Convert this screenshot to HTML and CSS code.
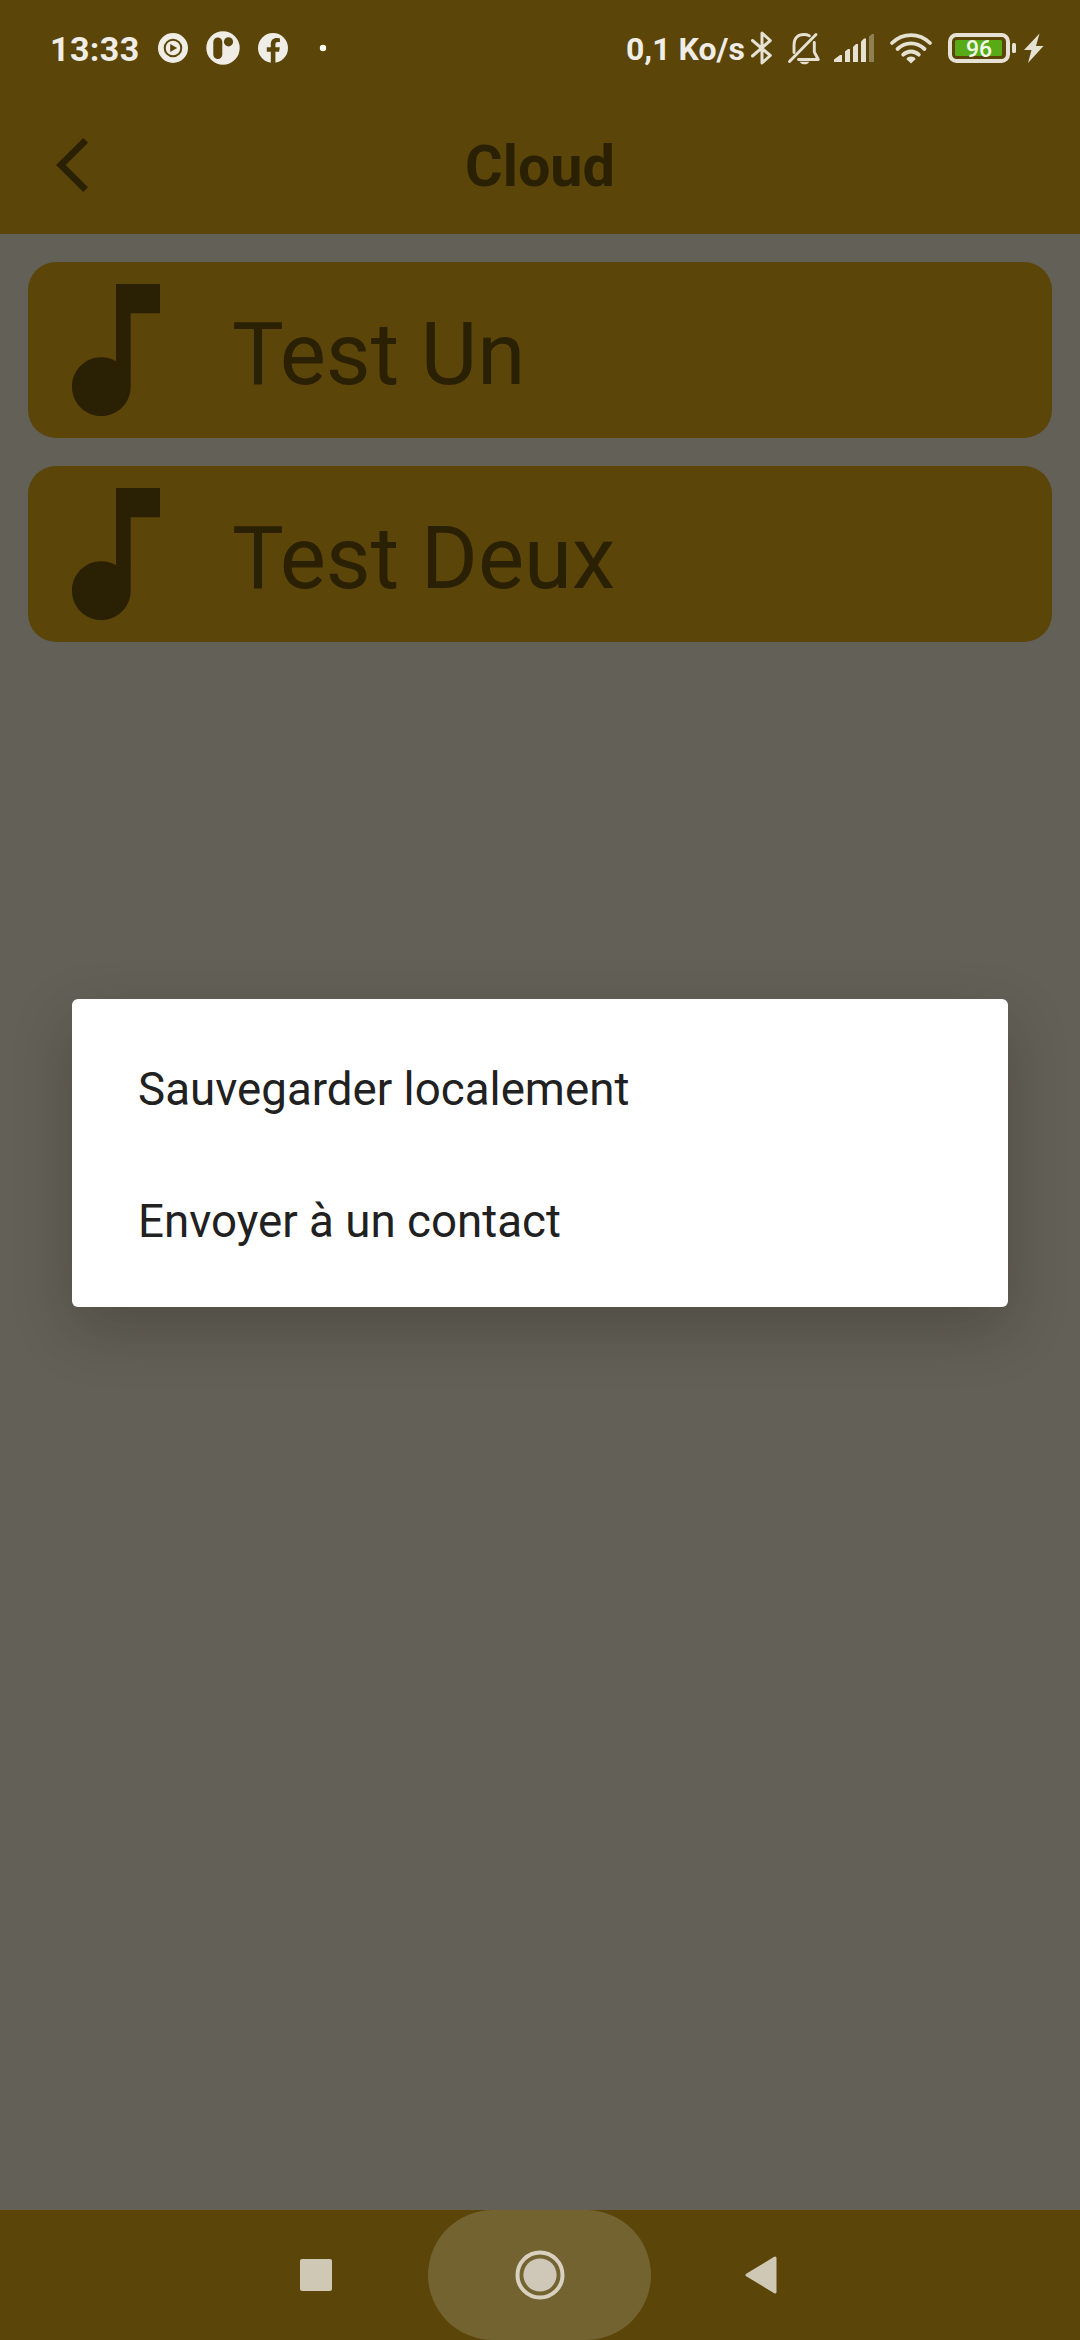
FILE: index.html
```html
<!DOCTYPE html>
<html lang="fr">
<head>
<meta charset="utf-8">
<title>Cloud</title>
<link rel="stylesheet" href="styles.css">
</head>
<body>
<div class="screen">
  <div class="status-bar">
    <span class="clock">13:33</span>
    <svg class="notifications" width="176" height="36" viewBox="0 0 176 36">
      <circle cx="17" cy="18" r="15" fill="#efede6"/>
      <circle cx="17" cy="18" r="8.3" fill="none" stroke="#5b4508" stroke-width="2"/>
      <path d="M14.2 14v8l7-4z" fill="#5b4508"/>
      <circle cx="67" cy="18" r="16.7" fill="#efede6"/>
      <rect x="57.300" y="7.500" width="9" height="21.500" rx="4.500" fill="#5b4508"/>
      <circle cx="72.500" cy="11.800" r="4.600" fill="#5b4508"/>
      <circle cx="117" cy="18" r="15" fill="#efede6"/>
      <path d="M114.800 34V21.800h-4v-4.500h4v-3.200c0-4 2.300-6.200 5.900-6.200 1.500 0 3.200.3 3.200.3v3.700h-2c-2 0-2.500 1.200-2.500 2.400v3h4.400l-.7 4.500h-3.700V34z" fill="#5b4508"/>
      <circle cx="167" cy="18" r="3.200" fill="#fff"/>
    </svg>
    <span class="speed">0,1 Ko/s</span>
    <svg class="bluetooth" width="24" height="36" viewBox="0 0 24 36">
      <path d="M3.500 10.500L21.300 25.500 13 33V3l8.300 7.500L3.500 26" fill="none" stroke="#e5e1d3" stroke-width="3" stroke-linejoin="round" stroke-linecap="round"/>
    </svg>
    <svg class="bell" width="34" height="36" viewBox="0 0 34 36">
      <g fill="none" stroke="#e5e1d3" stroke-width="2.900" stroke-linecap="round" stroke-linejoin="round">
        <path d="M2.500 31.500L29 4.500"/>
        <path d="M7 22.500V15C7 8.500 10.500 4.500 17 4.500c2 0 3.800.5 5.300 1.300"/>
        <path d="M27.300 12.500v9.500l4 7.500H11.500"/>
      </g>
      <path d="M12.500 31.700h10c-1 1.700-3 2.600-5 2.600s-4-.9-5-2.600z" fill="#e5e1d3"/>
    </svg>
    <svg class="signal" width="42" height="36" viewBox="0 0 42 36">
      <g fill="#e5e1d3">
        <path d="M1 32v-2.500L7 25h2v7z"/>
        <path d="M12 32V21.500L15 19h2v13z"/>
        <path d="M20 32V17l3-3h2v18z"/>
        <path d="M28 32V11.500l3-3h2V32z"/>
        <path d="M36 32V6.500L39 4h2v28z" opacity=".38"/>
      </g>
    </svg>
    <svg class="wifi" width="44" height="36" viewBox="0 0 44 36">
      <g fill="none" stroke="#e5e1d3" stroke-width="3.800" stroke-linecap="round">
        <path d="M3 13C14 2.500 30 2.500 41 13"/>
        <path d="M8.500 19c8-7.500 19-7.500 27 0"/>
        <path d="M14.200 24.700c4.700-4.300 10.900-4.300 15.600 0"/>
      </g>
      <path d="M22 33.500l-4.500-4.200c0-3.600 9-3.600 9 0z" fill="#e5e1d3"/>
    </svg>
    <svg class="battery" width="70" height="36" viewBox="0 0 70 36">
      <rect x="2" y="5" width="58" height="26" rx="6.500" fill="none" stroke="#e5e1d3" stroke-width="4"/>
      <rect x="7" y="10" width="47" height="16" rx="1.500" fill="#57ab17"/>
      <rect x="64" y="13" width="4" height="10" rx="1.500" fill="#e5e1d3"/>
      <text class="battery-level" x="31" y="26.500" text-anchor="middle">96</text>
    </svg>
    <svg class="charging" width="20" height="36" viewBox="0 0 20 36">
      <path d="M15.500 3.500L0 20h7.500L4 33 19.500 16H12z" fill="#e5e1d3"/>
    </svg>
  </div>

  <header class="app-bar">
    <svg class="back" width="34" height="56" viewBox="0 0 34 56">
      <path d="M28.300 1L33 5.800 10.700 28 33 50.200 28.300 55 1 28z" fill="#2a2003"/>
    </svg>
    <h1 class="title">Cloud</h1>
  </header>

  <main class="tracks">
    <div class="track">
      <svg class="note" viewBox="0 0 24 24"><path d="M12 3v10.550c-.59-.34-1.270-.55-2-.55-2.210 0-4 1.790-4 4s1.790 4 4 4 4-1.790 4-4V7h4V3z"/></svg>
      <span class="track-name">Test Un</span>
    </div>
    <div class="track">
      <svg class="note" viewBox="0 0 24 24"><path d="M12 3v10.550c-.59-.34-1.270-.55-2-.55-2.210 0-4 1.790-4 4s1.790 4 4 4 4-1.790 4-4V7h4V3z"/></svg>
      <span class="track-name">Test Deux</span>
    </div>
  </main>

  <nav class="nav-bar">
    <svg class="recents" width="32" height="32" viewBox="0 0 32 32"><rect width="32" height="32" rx="2" fill="#cfc8b4"/></svg>
    <div class="home">
      <svg width="50" height="50" viewBox="0 0 50 50">
        <circle cx="25" cy="25" r="22.500" fill="none" stroke="#d8d1c0" stroke-width="4"/>
        <circle cx="25" cy="25" r="16.600" fill="#cfc8b8"/>
      </svg>
    </div>
    <svg class="nav-back" width="32" height="38" viewBox="0 0 32 38"><path d="M2 19L30 2v34z" fill="#cfc8b4" stroke="#cfc8b4" stroke-width="3" stroke-linejoin="round"/></svg>
  </nav>

  <div class="overlay">
    <div class="dialog">
      <div class="option">Sauvegarder localement</div>
      <div class="option">Envoyer à un contact</div>
    </div>
  </div>
</div>
</body>
</html>
```

FILE: styles.css
```css
body {
  margin: 0;
  font-family: Roboto, "Noto Sans", sans-serif;
}

.screen {
  position: relative;
  display: flex;
  flex-direction: column;
  width: 1080px;
  height: 2340px;
  overflow: hidden;
  background: #636057;
}

.status-bar {
  display: flex;
  align-items: center;
  box-sizing: border-box;
  height: 96px;
  padding-left: 50px;
  background: #5b4508;
  color: #efede6;
  font-weight: 700;
  white-space: nowrap;
}

.status-bar svg {
  flex: none;
}

.clock {
  width: 106px;
  padding-top: 2px;
  font-size: 34px;
  letter-spacing: 0.4px;
}

.speed {
  width: 123px;
  margin-left: 294px;
  padding-top: 2px;
  font-size: 32px;
}

.bell {
  margin-left: 14px;
}

.signal {
  margin-left: 12px;
}

.wifi {
  margin-left: 14px;
}

.battery {
  margin-left: 15px;
}

.charging {
  margin-left: 6px;
}

.battery-level {
  fill: #f4f8e8;
  font-size: 23px;
  font-weight: 500;
}

.app-bar {
  display: grid;
  grid-template-columns: 1fr auto 1fr;
  align-items: center;
  height: 138px;
  background: #5b4508;
}

.back {
  margin-left: 55px;
}

.title {
  margin: 0;
  padding-top: 2px;
  color: #2a2003;
  font-size: 57.500px;
  font-weight: 700;
}

.tracks {
  display: flex;
  flex: 1;
  flex-direction: column;
  gap: 28px;
  padding: 28px;
}

.track {
  display: flex;
  align-items: center;
  gap: 28px;
  height: 176px;
  border-radius: 28px;
  background: #5b4508;
  color: #2a2003;
}

.note {
  width: 176px;
  height: 176px;
  fill: #2a2003;
}

.track-name {
  padding-top: 7px;
  font-size: 87px;
}

.nav-bar {
  display: flex;
  align-items: center;
  height: 130px;
  padding-left: 300px;
  background: #5b4508;
}

.home {
  display: grid;
  place-items: center;
  width: 223px;
  height: 130px;
  margin: 0 94px 0 96px;
  border-radius: 65px;
  background: #736330;
}

.overlay {
  position: absolute;
  inset: 0;
  display: flex;
  align-items: flex-start;
  padding: 999px 72px 0;
}

.dialog {
  flex: 1;
  padding: 22px 0;
  border-radius: 6px;
  background: #fff;
  box-shadow: 0 22px 60px rgba(20, 18, 10, 0.24);
}

.option {
  box-sizing: border-box;
  height: 132px;
  padding: 5px 66px 0;
  color: #212121;
  font-size: 45.700px;
  line-height: 128px;
}
```
